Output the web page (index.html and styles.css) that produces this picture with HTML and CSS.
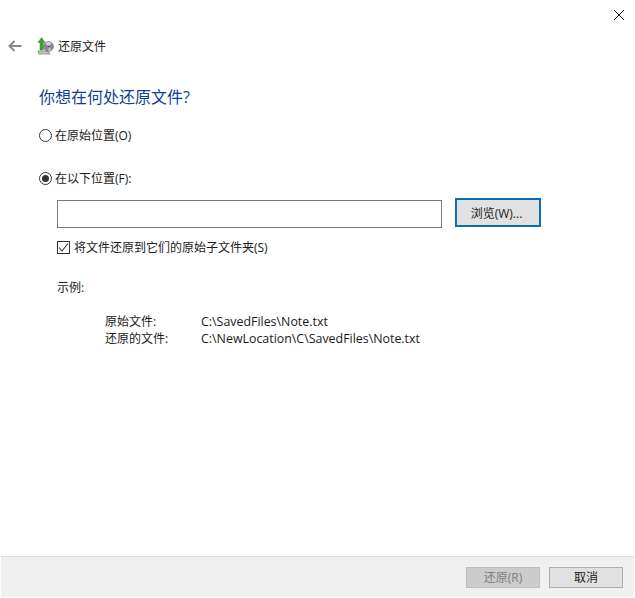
FILE: index.html
```html
<!DOCTYPE html>
<html lang="zh-CN">
<head>
<meta charset="utf-8">
<title>还原文件</title>
<link rel="stylesheet" href="styles.css">
</head>
<body>
<div class="window">
  <div class="titlebar">
    <svg class="close" width="12" height="12" viewBox="0 0 12 12"><path d="M1 1L11 11M11 1L1 11" stroke="#1a1a1a" stroke-width="1" fill="none"/></svg>
  </div>
  <div class="nav">
    <svg class="back" width="14" height="12" viewBox="0 0 14 12"><path d="M13.500 6H1.500M6.500 1L1.500 6L6.500 11" stroke="#858585" stroke-width="1.800" fill="none"/></svg>
    <svg class="appicon" width="17" height="18" viewBox="0 0 17 18">
      <path d="M1 14h9.500l2.500 3H2z" fill="#c3c7c1" stroke="#7b807b" stroke-width=".8"/>
      <circle cx="11.500" cy="9.500" r="4.900" fill="#8f8697" stroke="#6a6670" stroke-width=".6"/>
      <path d="M11.500 9.500L8.300 6.200a4.500 4.500 0 0 1 6.300 0z" fill="#d8d3db"/>
      <path d="M11.500 9.500L14.500 12.700a4.500 4.500 0 0 1-3 1.200z" fill="#c4bfc8"/>
      <circle cx="11.500" cy="9.500" r="1" fill="#5b5660"/>
      <path d="M4.500 0.500L8 5.500H6.200V13H3V5.500H1z" fill="#3fa535" stroke="#2f8a2a" stroke-width=".5"/>
    </svg>
    <span class="navtitle">还原文件</span>
  </div>
  <main class="content">
    <h1 class="heading">你想在何处还原文件?</h1>
    <label class="radio-row first"><span class="radio"></span>在原始位置(O)</label>
    <label class="radio-row second"><span class="radio checked"></span>在以下位置(F):</label>
    <div class="details">
      <div class="path-row">
        <div class="pathbox"></div>
        <button class="btn browse">浏览(W)...</button>
      </div>
      <label class="check-row">
        <span class="check"><svg width="11" height="11" viewBox="0 0 11 11"><path d="M1 5.500L4 9L10 1.500" stroke="#333" stroke-width="1.100" fill="none"/></svg></span>将文件还原到它们的原始子文件夹(S)
      </label>
      <div class="example-label">示例:</div>
      <div class="example">
        <div class="ex-row"><span class="ex-key">原始文件:</span><span class="ex-path">C:\SavedFiles\Note.txt</span></div>
        <div class="ex-row"><span class="ex-key">还原的文件:</span><span class="ex-path">C:\NewLocation\C\SavedFiles\Note.txt</span></div>
      </div>
    </div>
  </main>
  <footer class="footer">
    <button class="btn action disabled">还原(R)</button>
    <button class="btn action">取消</button>
  </footer>
</div>
</body>
</html>
```
FILE: styles.css
```css
html, body {
  margin: 0;
  padding: 0;
  background: #fff;
}
.window {
  width: 635px;
  height: 598px;
  display: flex;
  flex-direction: column;
  font-family: "Open Sans", "Noto Sans CJK SC", sans-serif;
  font-size: 12px;
  color: #1a1a1a;
  overflow: hidden;
}
.titlebar {
  height: 37px;
  display: flex;
  justify-content: flex-end;
  align-items: flex-start;
  padding: 9px 10px 0 0;
  box-sizing: border-box;
}
.nav {
  height: 18px;
  display: flex;
  align-items: center;
  padding-left: 8px;
}
.back {
  margin-right: 15px;
}
.appicon {
  margin-right: 4px;
}
.navtitle {
  font-size: 12px;
}
.content {
  flex: 1;
  padding: 0 39px;
}
.heading {
  margin: 31px 0 0;
  font-size: 16px;
  line-height: 22px;
  font-weight: 400;
  color: #0f3f96;
}
.radio-row {
  display: flex;
  align-items: center;
  gap: 3px;
  height: 18px;
}
.radio-row.first {
  margin-top: 18px;
}
.radio-row.second {
  margin-top: 25px;
}
.radio {
  width: 11px;
  height: 11px;
  border: 1px solid #333;
  border-radius: 50%;
  background: #fff;
  position: relative;
}
.radio.checked::after {
  content: "";
  position: absolute;
  inset: 2px;
  border-radius: 50%;
  background: #333;
}
.details {
  padding-left: 18px;
}
.path-row {
  display: flex;
  align-items: flex-start;
  margin-top: 11px;
}
.pathbox {
  width: 385px;
  height: 28px;
  box-sizing: border-box;
  border: 1px solid #7a7a7a;
  background: #fff;
  margin-top: 2px;
}
.btn {
  font: inherit;
  color: #1a1a1a;
  background: #e1e1e1;
  border: 1px solid #adadad;
  padding: 0;
}
.browse {
  width: 86px;
  height: 29px;
  margin-left: 13px;
  padding-right: 3px;
  border: 2px solid #0a6fb0;
}
.check-row {
  display: flex;
  align-items: center;
  gap: 4px;
  height: 18px;
  margin-top: 10px;
}
.check {
  width: 11px;
  height: 11px;
  border: 1px solid #333;
  display: flex;
  align-items: center;
  justify-content: center;
  background: #fff;
}
.example-label {
  height: 18px;
  line-height: 18px;
  margin-top: 23px;
}
.example {
  margin-top: 16px;
  padding-left: 48px;
}
.ex-row {
  display: flex;
  height: 17px;
  line-height: 17px;
}
.ex-key {
  width: 96px;
}
.ex-path {
  font-size: 12.400px;
}
.footer {
  height: 41px;
  margin: 0 1px 1px;
  box-sizing: border-box;
  background: #f0f0f0;
  border-top: 1px solid #dfdfdf;
  display: flex;
  justify-content: flex-end;
  align-items: flex-start;
  gap: 9px;
  padding: 10px 11px 0 0;
}
.action {
  width: 74px;
  height: 21px;
  line-height: 19px;
}
.action.disabled {
  background: #cccccc;
  border-color: #bfbfbf;
  color: #7f7f7f;
}
```
